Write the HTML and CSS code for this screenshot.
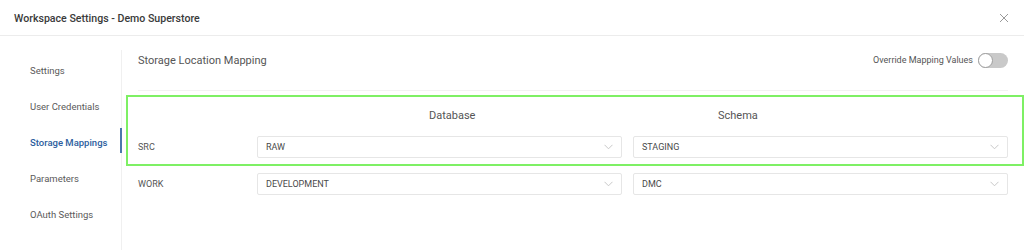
FILE: index.html
```html
<!DOCTYPE html>
<html>
<head>
<meta charset="utf-8">
<link rel="stylesheet" href="styles.css">
</head>
<body>
<div class="modal">
  <header class="modal-header">
    <h1 class="modal-title">Workspace Settings - Demo Superstore</h1>
    <button class="close-btn" aria-label="Close">
      <svg width="10" height="10" viewBox="0 0 10 10"><path d="M1 1L9 9M9 1L1 9" stroke="#9a9a9a" stroke-width="1" fill="none"/></svg>
    </button>
  </header>
  <div class="modal-body">
    <nav class="sidebar">
      <a class="nav-item">Settings</a>
      <a class="nav-item">User Credentials</a>
      <a class="nav-item active">Storage Mappings</a>
      <a class="nav-item">Parameters</a>
      <a class="nav-item">OAuth Settings</a>
    </nav>
    <main class="content">
      <div class="content-head">
        <h2 class="section-title">Storage Location Mapping</h2>
        <label class="override">
          <span>Override Mapping Values</span>
          <span class="toggle"><span class="knob"></span></span>
        </label>
      </div>
      <div class="mapping">
        <div class="highlight"></div>
        <div class="grid">
          <div></div>
          <div class="col-head db">Database</div>
          <div class="col-head schema">Schema</div>

          <div class="row-label">SRC</div>
          <div class="select"><span>RAW</span><svg class="chev" width="9" height="6" viewBox="0 0 9 6"><path d="M0.5 0.8L4.5 4.8L8.5 0.8" stroke="#c8c8c8" stroke-width="1" fill="none"/></svg></div>
          <div class="select"><span>STAGING</span><svg class="chev" width="9" height="6" viewBox="0 0 9 6"><path d="M0.5 0.8L4.5 4.8L8.5 0.8" stroke="#c8c8c8" stroke-width="1" fill="none"/></svg></div>

          <div class="row-label">WORK</div>
          <div class="select"><span>DEVELOPMENT</span><svg class="chev" width="9" height="6" viewBox="0 0 9 6"><path d="M0.5 0.8L4.5 4.8L8.5 0.8" stroke="#c8c8c8" stroke-width="1" fill="none"/></svg></div>
          <div class="select"><span>DMC</span><svg class="chev" width="9" height="6" viewBox="0 0 9 6"><path d="M0.5 0.8L4.5 4.8L8.5 0.8" stroke="#c8c8c8" stroke-width="1" fill="none"/></svg></div>
        </div>
      </div>
    </main>
  </div>
</div>
</body>
</html>
```

FILE: styles.css
```css
* { box-sizing: border-box; }
html, body { margin: 0; padding: 0; background: #fff; }
body { font-family: Roboto, "Liberation Sans", sans-serif; color: #555; width: 1024px; height: 250px; overflow: hidden; }

.modal-header {
  height: 36px;
  border-bottom: 1px solid #ececec;
  display: flex;
  align-items: center;
  justify-content: space-between;
  padding: 0 14px 0 14px;
}
.modal-title {
  margin: 0;
  font-size: 10.6px;
  font-weight: 500;
  color: #3a3a3a;
  padding-top: 1px;
}
.close-btn {
  border: 0;
  background: none;
  padding: 0;
  margin-right: 1px;
  width: 10px;
  height: 10px;
  display: flex;
}

.modal-body { display: flex; height: 214px; }

.sidebar {
  flex: 0 0 122px;
  width: 122px;
  margin-top: 14px;
  border-right: 1px solid #f0f0f0;
  display: flex;
  flex-direction: column;
  padding-top: 9px;
}
.nav-item {
  height: 36px;
  line-height: 24px;
  padding-left: 30px;
  font-size: 9.5px;
  color: #5a5a5a;
  position: relative;
}
.nav-item.active {
  color: #2d5e9e;
  font-weight: 500;
}
.nav-item.active::after {
  content: "";
  position: absolute;
  right: -1px;
  top: -3px;
  width: 2px;
  height: 25px;
  background: #4b78ad;
}

.content { flex: 1; padding: 16px 16px 0 16px; position: relative; min-width: 0; }

.content-head {
  display: flex;
  align-items: center;
  justify-content: space-between;
  height: 16px;
  padding-bottom: 22px;
  border-bottom: 1px solid #f2f2f2;
  box-sizing: content-box;
}
.section-title { margin: 0; font-size: 11px; font-weight: 400; color: #555; }
.override { display: flex; align-items: center; gap: 5px; font-size: 9px; color: #555; }
.toggle {
  width: 30px; height: 15px;
  border-radius: 8px;
  background: #c9c9c9;
  position: relative;
  display: inline-block;
}
.knob {
  position: absolute;
  left: 0; top: 0;
  width: 15px; height: 15px;
  border-radius: 50%;
  background: #fff;
  border: 1px solid #9e9e9e;
}

.mapping { position: relative; }
.highlight {
  position: absolute;
  left: -12px;
  right: -16px;
  top: 4px;
  height: 71px;
  border: 2px solid #7ef064;
  pointer-events: none;
}

.grid {
  display: grid;
  grid-template-columns: 108px 365px 375px;
  column-gap: 11px;
  row-gap: 15px;
  align-items: center;
  padding-top: 17px;
}
.col-head { font-size: 11px; color: #555; height: 12px; line-height: 16px; margin-bottom: 1px; }
.col-head.db { padding-left: 172px; }
.col-head.schema { padding-left: 85px; }
.row-label { font-size: 9px; color: #555; }
.select {
  height: 22px;
  border: 1px solid #e6e6e6;
  border-radius: 2px;
  display: flex;
  align-items: center;
  justify-content: space-between;
  padding: 0 8px 0 8px;
  font-size: 9px;
  color: #4a4a4a;
}
.chev { display: block; }
```
